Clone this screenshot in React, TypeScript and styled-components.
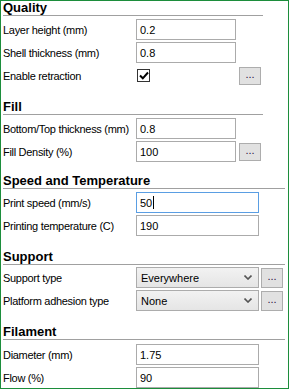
import React from "react";
import styled, { createGlobalStyle } from "styled-components";

const GlobalStyle = createGlobalStyle`
  html, body {
    margin: 0;
    padding: 0;
    background: #ffffff;
  }
  body {
    font-family: "Liberation Sans", Arial, sans-serif;
    color: #000;
  }
`;

const Frame = styled.div`
  box-sizing: border-box;
  width: 289px;
  height: 389px;
  border: 1px solid #1c8d3b;
  padding: 0 0 0 2px;
  background: #fff;
  overflow: hidden;
`;

const Section = styled.section<{ $top: number; $width: number }>`
  margin-top: ${(p) => p.$top}px;
  width: ${(p) => p.$width}px;
`;

const Heading = styled.div`
  height: 14px;
  line-height: 14px;
  font-size: 13px;
  font-weight: bold;
  border-bottom: 1px solid #a0a0a0;
  white-space: nowrap;
`;

const Rows = styled.div<{ $top: number }>`
  display: flex;
  flex-direction: column;
  gap: 2px;
  margin-top: ${(p) => p.$top}px;
`;

const Row = styled.div<{ $gap?: number }>`
  display: grid;
  grid-template-columns: 133px auto auto;
  justify-content: start;
  align-items: center;
  height: 21px;

  & > :nth-child(3) {
    margin-left: ${(p) => p.$gap ?? 3}px;
  }
`;

const Label = styled.span`
  font-size: 11px;
  letter-spacing: -0.3px;
  white-space: nowrap;
`;

const Field = styled.div<{ $w: number; $focus?: boolean }>`
  box-sizing: border-box;
  width: ${(p) => p.$w}px;
  height: 21px;
  border: 1px solid ${(p) => (p.$focus ? "#5a9ee3" : "#ababab")};
  background: #fff;
  padding: 0 3px;
  display: flex;
  align-items: center;
  font-size: 11px;
`;

const Caret = styled.span`
  display: inline-block;
  width: 1px;
  height: 13px;
  background: #000;
  margin-left: 1px;
`;

const CheckCell = styled.div`
  width: 100px;
  display: flex;
  align-items: center;
`;

const Check = styled.div`
  box-sizing: border-box;
  width: 13px;
  height: 13px;
  margin-left: 1px;
  border: 1px solid #333;
  background: #fff;
  display: flex;
  align-items: center;
  justify-content: center;
`;

const Dots = styled.div<{ $h: number }>`
  box-sizing: border-box;
  width: 22px;
  height: ${(p) => p.$h}px;
  border: 1px solid #adadad;
  background: #e1e1e1;
  display: flex;
  align-items: center;
  justify-content: center;
  font-size: 11px;
  color: #2a1440;
  padding-bottom: 3px;
`;

const Select = styled.div<{ $w: number }>`
  box-sizing: border-box;
  width: ${(p) => p.$w}px;
  height: 21px;
  border: 1px solid #acacac;
  background: linear-gradient(#f2f2f2, #e5e5e5);
  padding: 0 6px 0 4px;
  display: flex;
  align-items: center;
  justify-content: space-between;
  font-size: 11px;
`;

function Chevron() {
  return (
    <svg width="8" height="5" viewBox="0 0 8 5">
      <path d="M0.5 0.5 L4 4 L7.5 0.5" fill="none" stroke="#555" strokeWidth="1.6" />
    </svg>
  );
}

function Tick() {
  return (
    <svg width="10" height="9" viewBox="0 0 10 9">
      <path d="M1 4.5 L3.8 7.3 L9 1.5" fill="none" stroke="#000" strokeWidth="2" />
    </svg>
  );
}

export default function App() {
  return (
    <>
      <GlobalStyle />
      <Frame>
        <Section $top={0} $width={260}>
          <Heading>Quality</Heading>
          <Rows $top={3}>
            <Row>
              <Label>Layer height (mm)</Label>
              <Field $w={100}>0.2</Field>
            </Row>
            <Row>
              <Label>Shell thickness (mm)</Label>
              <Field $w={100}>0.8</Field>
            </Row>
            <Row>
              <Label>Enable retraction</Label>
              <CheckCell>
                <Check>
                  <Tick />
                </Check>
              </CheckCell>
              <Dots $h={18}>...</Dots>
            </Row>
          </Rows>
        </Section>

        <Section $top={14} $width={260}>
          <Heading>Fill</Heading>
          <Rows $top={3}>
            <Row>
              <Label>Bottom/Top thickness (mm)</Label>
              <Field $w={100}>0.8</Field>
            </Row>
            <Row>
              <Label>Fill Density (%)</Label>
              <Field $w={100}>100</Field>
              <Dots $h={18}>...</Dots>
            </Row>
          </Rows>
        </Section>

        <Section $top={12} $width={282}>
          <Heading>Speed and Temperature</Heading>
          <Rows $top={3}>
            <Row>
              <Label>Print speed (mm/s)</Label>
              <Field $w={123} $focus>
                50
                <Caret />
              </Field>
            </Row>
            <Row>
              <Label>Printing temperature (C)</Label>
              <Field $w={123}>190</Field>
            </Row>
          </Rows>
        </Section>

        <Section $top={14} $width={282}>
          <Heading>Support</Heading>
          <Rows $top={2}>
            <Row $gap={2}>
              <Label>Support type</Label>
              <Select $w={123}>
                Everywhere
                <Chevron />
              </Select>
              <Dots $h={20}>...</Dots>
            </Row>
            <Row $gap={2}>
              <Label>Platform adhesion type</Label>
              <Select $w={123}>
                None
                <Chevron />
              </Select>
              <Dots $h={20}>...</Dots>
            </Row>
          </Rows>
        </Section>

        <Section $top={14} $width={282}>
          <Heading>Filament</Heading>
          <Rows $top={4}>
            <Row>
              <Label>Diameter (mm)</Label>
              <Field $w={123}>1.75</Field>
            </Row>
            <Row>
              <Label>Flow (%)</Label>
              <Field $w={123}>90</Field>
            </Row>
          </Rows>
        </Section>
      </Frame>
    </>
  );
}
